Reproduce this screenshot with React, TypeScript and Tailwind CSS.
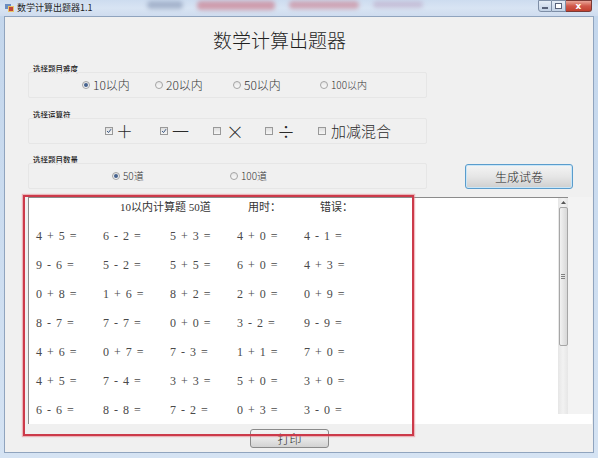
import React from "react";

const cjk = { fontFamily: '"Noto Sans CJK SC", "Noto Sans", sans-serif' };
const mathFont = { fontFamily: '"Liberation Serif", "Noto Sans CJK SC", serif' };

function Radio({ checked }: { checked?: boolean }) {
  return (
    <span className="w-[8px] h-[8px] rounded-full border border-[#a4a4a4] bg-gradient-to-b from-[#e6e6e6] to-[#fafafa] flex items-center justify-center shrink-0">
      {checked && <span className="w-[4px] h-[4px] rounded-full bg-[#46628e]" />}
    </span>
  );
}

function Check({ checked }: { checked?: boolean }) {
  return (
    <span className="w-[8px] h-[8px] border border-[#999] bg-gradient-to-b from-[#dedede] to-[#f6f6f6] flex items-center justify-center shrink-0">
      {checked && (
        <svg width="6" height="6" viewBox="0 0 6 6">
          <path d="M1 3 L2.5 4.6 L5 1.2" stroke="#3d5a86" strokeWidth="1" fill="none" />
        </svg>
      )}
    </span>
  );
}

const rows = [
  ["4 + 5 =", "6 - 2 =", "5 + 3 =", "4 + 0 =", "4 - 1 ="],
  ["9 - 6 =", "5 - 2 =", "5 + 5 =", "6 + 0 =", "4 + 3 ="],
  ["0 + 8 =", "1 + 6 =", "8 + 2 =", "2 + 0 =", "0 + 9 ="],
  ["8 - 7 =", "7 - 7 =", "0 + 0 =", "3 - 2 =", "9 - 9 ="],
  ["4 + 6 =", "0 + 7 =", "7 - 3 =", "1 + 1 =", "7 + 0 ="],
  ["4 + 5 =", "7 - 4 =", "3 + 3 =", "5 + 0 =", "3 + 0 ="],
  ["6 - 6 =", "8 - 8 =", "7 - 2 =", "0 + 3 =", "3 - 0 ="],
];

export default function App() {
  return (
    <div className="w-[598px] h-[458px] flex flex-col bg-gradient-to-b from-[#c3d6ec] to-[#d5e3f3] overflow-hidden" style={cjk}>
      {/* title bar */}
      <div className="h-[16px] flex items-start shrink-0 bg-gradient-to-b from-[#cddcef] via-[#d8e4f3] to-[#cfdcef]">
        <div className="ml-[5px] mt-[3px] w-[9px] h-[9px] flex flex-col">
          <svg width="9" height="9" viewBox="0 0 9 9">
            <rect x="0" y="1" width="6" height="5" fill="#6a8cc0" />
            <rect x="3" y="3" width="6" height="6" fill="#e8c46a" />
            <rect x="4" y="4" width="4" height="4" fill="#c0463a" />
          </svg>
        </div>
        <span className="ml-[3px] mt-[2px] text-[9px] leading-[11px] text-[#1e1e1e]">数学计算出题器1.1</span>
        <div className="ml-[54px] flex items-start gap-[14px] mt-[1px] blur-[2px] opacity-50">
          <span className="w-[36px] h-[8px] bg-[#7888a8] rounded-sm" />
          <span className="w-[78px] h-[9px] bg-[#c85a6a] rounded-sm" />
          <span className="w-[70px] h-[8px] bg-[#c86a7a] rounded-sm" />
          <span className="w-[50px] h-[7px] bg-[#b8a0c0] rounded-sm" />
        </div>
        <div className="ml-auto mr-[6px] flex items-start">
          <div className="w-[14px] h-[12px] border border-[#7e8ea6] rounded-bl-[3px] bg-gradient-to-b from-[#e4ecf6] to-[#c3d2e6] flex items-center justify-center">
            <span className="w-[6px] h-[2px] bg-white border border-[#58627a] mt-[4px]" />
          </div>
          <div className="w-[14px] h-[12px] border border-l-0 border-[#7e8ea6] bg-gradient-to-b from-[#e4ecf6] to-[#c3d2e6] flex items-center justify-center">
            <span className="w-[7px] h-[6px] border border-[#58627a] bg-white" />
          </div>
          <div className="w-[26px] h-[12px] border border-l-0 border-[#7a3a36] rounded-br-[3px] bg-gradient-to-b from-[#e8a598] via-[#d0584a] to-[#c2402f] flex items-center justify-center">
            <span className="text-white text-[9px] leading-[9px] font-bold" style={{ fontFamily: '"DejaVu Sans", sans-serif' }}>x</span>
          </div>
        </div>
      </div>

      {/* client */}
      <div className="mx-[4px] mb-[5px] flex-1 bg-[#f0f0f0] border border-[#90a4be] relative flex flex-col">
        <div className="pl-[208px] pt-[11px] text-[19px] leading-[24px] font-light text-[#1f1f1f]">数学计算出题器</div>

        <div className="flex items-end">
          <div className="ml-[23px] w-[399px] flex flex-col">
            {/* group 1 */}
            <div className="mt-[14px] pl-[5px] h-[6px] text-[7.5px] leading-[6px] font-medium text-[#222]">选择题目难度</div>
            <div className="h-[26px] border border-[#e6e6e6] rounded-[2px] flex items-center pl-[53px] text-[#333] font-light">
              <div className="w-[73px] flex items-center gap-[3px]"><Radio checked /><span className="text-[12px] leading-[14px]">10以内</span></div>
              <div className="w-[78px] flex items-center gap-[3px]"><Radio /><span className="text-[12px] leading-[14px]">20以内</span></div>
              <div className="w-[87px] flex items-center gap-[3px]"><Radio /><span className="text-[12px] leading-[14px]">50以内</span></div>
              <div className="flex items-center gap-[3px]"><Radio /><span className="text-[10px] leading-[12px]">100以内</span></div>
            </div>

            {/* group 2 */}
            <div className="mt-[14px] pl-[5px] h-[6px] text-[7.5px] leading-[6px] font-medium text-[#222]">选择运算符</div>
            <div className="h-[26px] border border-[#e6e6e6] rounded-[2px] flex items-center pl-[76px] text-[#2a2a2a]">
              <div className="w-[55px] flex items-center gap-[3px]"><Check checked /><span className="text-[17px] leading-[20px] font-extralight">＋</span></div>
              <div className="w-[53px] flex items-center gap-[4px]"><Check checked /><span className="text-[17px] leading-[20px] font-light">一</span></div>
              <div className="w-[52px] flex items-center gap-[5px]"><Check /><span className="text-[18px] leading-[20px] font-extralight">×</span></div>
              <div className="w-[53px] flex items-center gap-[4px]"><Check /><span className="text-[18px] leading-[20px] font-extralight">÷</span></div>
              <div className="flex items-center gap-[5px]"><Check /><span className="text-[15px] leading-[18px] font-light">加减混合</span></div>
            </div>

            {/* group 3 */}
            <div className="mt-[13px] pl-[5px] h-[6px] text-[7.5px] leading-[6px] font-medium text-[#222]">选择题目数量</div>
            <div className="h-[26px] border border-[#e6e6e6] rounded-[2px] flex items-center pl-[83px] text-[#333] font-light">
              <div className="w-[118px] flex items-center gap-[3px]"><Radio checked /><span className="text-[10px] leading-[12px]">50道</span></div>
              <div className="flex items-center gap-[3px]"><Radio /><span className="text-[10px] leading-[12px]">100道</span></div>
            </div>
          </div>

          <button className="ml-[38px] w-[108px] h-[25px] border border-[#5a9ccc] rounded-[3px] bg-gradient-to-b from-[#f4f4f4] via-[#e6e6e6] to-[#cfcfcf] text-[12px] font-light text-[#1e1e1e] shadow-[inset_0_0_0_1px_#c8e6f8]">
            生成试卷
          </button>
        </div>

        {/* text box */}
        <div className="mt-[8px] ml-[23px] w-[564px] h-[227px] flex">
          <div className="flex-1 bg-white border-t border-l border-[#8c8c8c] flex flex-col text-[#444]">
            <div className="h-[18px] flex items-center text-[11px] text-[#333]" style={mathFont}>
              <span className="ml-[91px] w-[128px]">10以内计算题 50道</span>
              <span className="w-[72px]">用时：</span>
              <span>错误：</span>
            </div>
            <div className="mt-[5px] flex flex-col">
              {rows.map((r, i) => (
                <div key={i} className="h-[29px] grid grid-cols-[67px_67px_67px_67px_67px] pl-[7px] items-center">
                  {r.map((c, j) => (
                    <span key={j} className="whitespace-pre text-[12px] tracking-[1px] text-[#4a4a4a]" style={mathFont}>{c}</span>
                  ))}
                </div>
              ))}
            </div>
          </div>
          <div className="w-[34px] flex flex-col">
            <div className="h-[217px] flex">
              <div className="w-[10px] border-t border-[#8c8c8c] bg-gradient-to-r from-[#e6e6e6] via-[#f2f2f2] to-[#e6e6e6] flex flex-col items-center">
                <div className="h-[9px] flex items-center justify-center">
                  <svg width="5" height="3" viewBox="0 0 5 3"><path d="M0 3 L2.5 0 L5 3 Z" fill="#555" /></svg>
                </div>
                <div className="w-[9px] h-[139px] border border-[#a6a6a6] rounded-[2px] bg-gradient-to-r from-[#f2f2f2] to-[#d8d8d8] flex items-center justify-center">
                  <div className="flex flex-col gap-[1px]">
                    <span className="w-[4px] h-px bg-[#808080]" />
                    <span className="w-[4px] h-px bg-[#808080]" />
                    <span className="w-[4px] h-px bg-[#808080]" />
                  </div>
                </div>
              </div>
              <div className="flex-1 bg-[#f3f3f3]" />
            </div>
            <div className="flex-1 bg-white" />
          </div>
        </div>

        <button className="mt-[5px] ml-[245px] w-[79px] h-[19px] border border-[#8a8a8a] rounded-[3px] bg-gradient-to-b from-[#f4f4f4] via-[#e8e8e8] to-[#d2d2d2] text-[12px] leading-[14px] font-light text-[#1e1e1e]">
          打印
        </button>

        {/* red annotation overlay */}
        <div className="absolute left-[18px] top-[178px] w-[391px] h-[241px] border-2 border-[#cc3a4a] shadow-[0_0_1px_1px_rgba(230,120,130,0.5)] pointer-events-none" />
      </div>
    </div>
  );
}
